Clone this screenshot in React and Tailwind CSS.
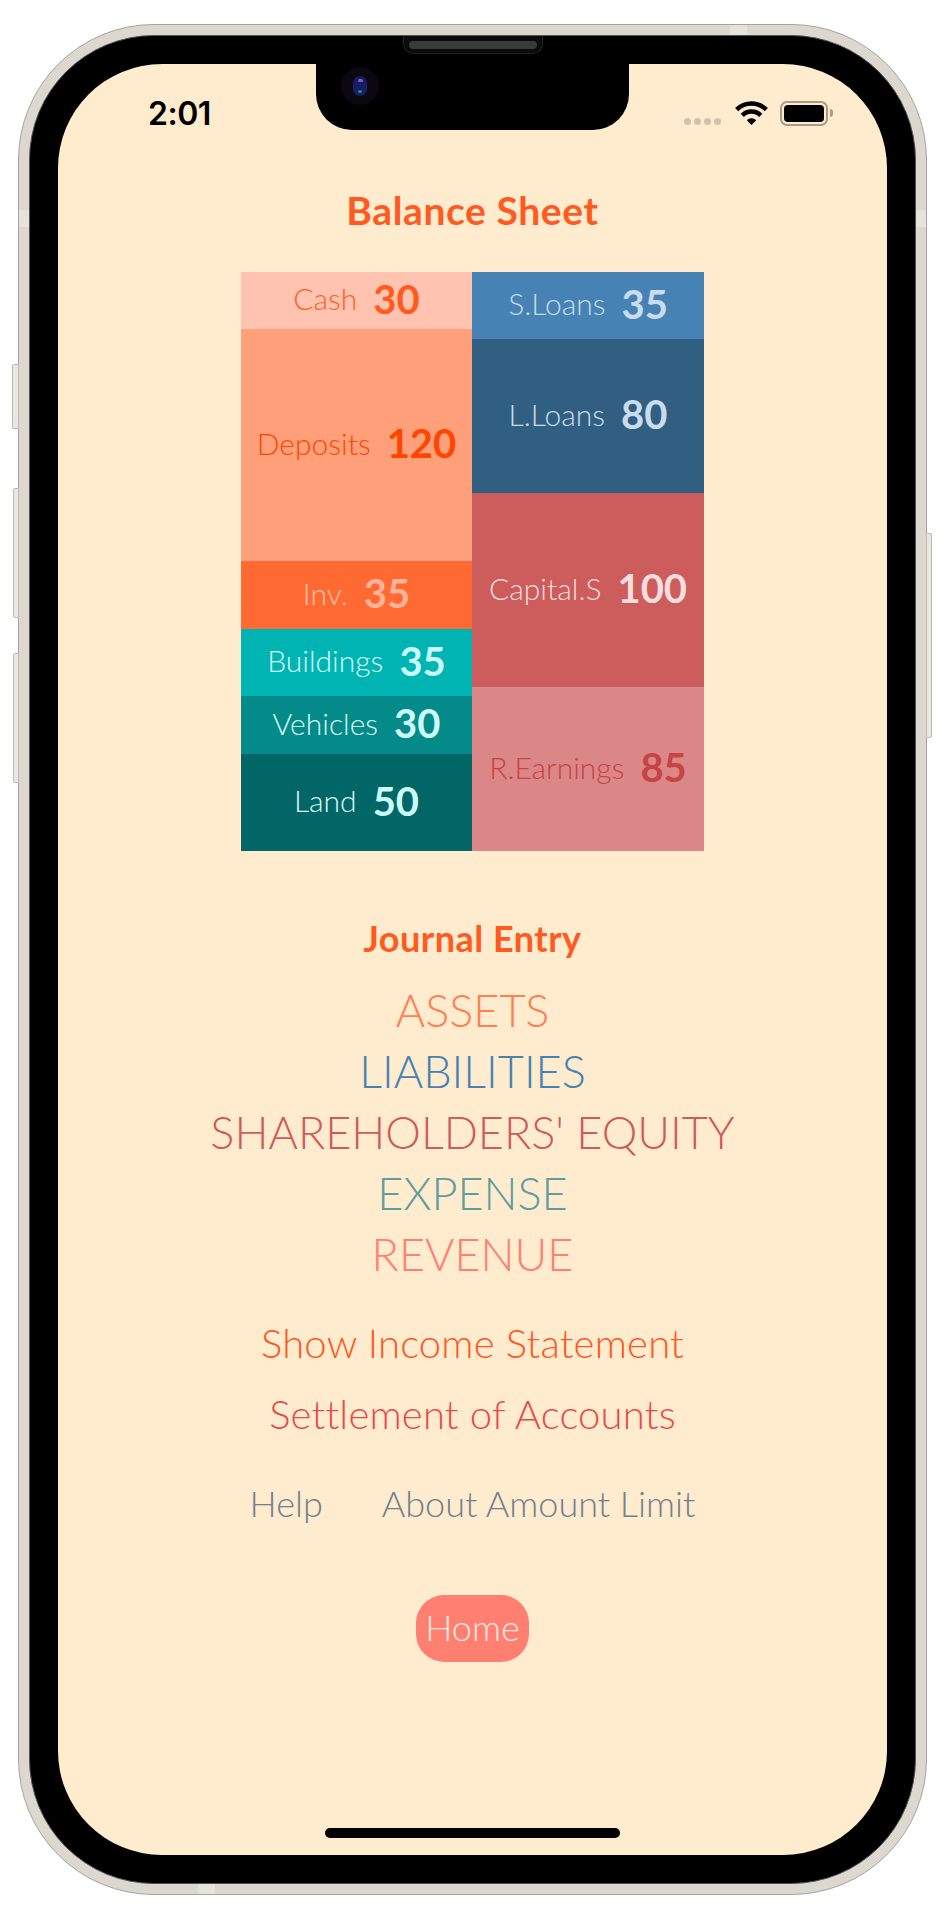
const assets = [
  { name: 'Cash', value: 30, box: 'h-[57px] bg-[#ffc3af]', label: 'text-[#ff5f27]', num: 'text-[#ff5a1f]' },
  { name: 'Deposits', value: 120, box: 'h-[232px] bg-[#ffa07a]', label: 'text-[#ff4500]', num: 'text-[#ff4500]' },
  { name: 'Inv.', value: 35, box: 'h-[68px] bg-[#ff6a33]', label: 'text-[#ffc0a8]', num: 'text-[#ffb398]' },
  { name: 'Buildings', value: 35, box: 'h-[67px] bg-[#00b4b4]', label: 'text-[#d8fbfb]', num: 'text-[#ccfafa]' },
  { name: 'Vehicles', value: 30, box: 'h-[58px] bg-[#058a8a]', label: 'text-[#d8fbfb]', num: 'text-[#ccfafa]' },
  { name: 'Land', value: 50, box: 'h-[97px] bg-[#036666]', label: 'text-[#d8fbfb]', num: 'text-[#ccfafa]' },
];

const claims = [
  { name: 'S.Loans', value: 35, box: 'h-[67px] bg-[#4682b4]', label: 'text-[#c9dcee]', num: 'text-[#c9dcee]' },
  { name: 'L.Loans', value: 80, box: 'h-[154px] bg-[#315f82]', label: 'text-[#c9dcee]', num: 'text-[#c9dcee]' },
  { name: 'Capital.S', value: 100, box: 'h-[194px] bg-[#cd5c5c]', label: 'text-[#f6dede]', num: 'text-[#f6dede]' },
  { name: 'R.Earnings', value: 85, box: 'h-[164px] bg-[#db8787]', label: 'text-[#c64444]', num: 'text-[#c64444]' },
];

const accounts = [
  { name: 'ASSETS', color: 'text-[#ff7f50]' },
  { name: 'LIABILITIES', color: 'text-[#4682b4]' },
  { name: "SHAREHOLDERS' EQUITY", color: 'text-[#cd5c5c]' },
  { name: 'EXPENSE', color: 'text-[#5f9ea0]' },
  { name: 'REVENUE', color: 'text-[#ff8070]' },
];

function Cell({ item }) {
  return (
    <div className={`flex items-center justify-center gap-[16px] pb-[4px] ${item.box}`}>
      <span className={`text-[30px] font-light ${item.label}`}>{item.name}</span>
      <span className={`text-[40px] font-bold ${item.num}`}>{item.value}</span>
    </div>
  );
}

function StatusBar() {
  return (
    <div className="w-full h-[38px] flex items-center justify-between pl-[90px] pr-[54px]">
      <span className="mt-[2px] text-[32px] font-semibold text-black font-['Inter',sans-serif] tracking-[-0.5px]">2:01</span>
      <div className="flex items-center">
        <div className="flex gap-[3px] mt-[16px] mr-[14px]">
          <i className="w-[7px] h-[7px] rounded-full bg-[#cfc3ae]" />
          <i className="w-[7px] h-[7px] rounded-full bg-[#cfc3ae]" />
          <i className="w-[7px] h-[7px] rounded-full bg-[#cfc3ae]" />
          <i className="w-[7px] h-[7px] rounded-full bg-[#cfc3ae]" />
        </div>
        <svg width="33" height="25" viewBox="0 0 33 25" className="mr-[12px]">
          <path d="M1.65 8.65 A21 21 0 0 1 31.35 8.65" fill="none" stroke="#000" strokeWidth="4.5" />
          <path d="M7.3 14.3 A13 13 0 0 1 25.7 14.3" fill="none" stroke="#000" strokeWidth="4.5" />
          <path d="M16.5 24 L11.8 19.3 A6.6 6.6 0 0 1 21.2 19.3 Z" fill="#000" />
        </svg>
        <div className="w-[48px] h-[25px] rounded-[7px] border-2 border-[#a89c88] p-[2px]">
          <div className="w-full h-full rounded-[4px] bg-black" />
        </div>
        <div className="w-[3px] h-[8px] rounded-r-full bg-[#a89c88] ml-[2px]" />
      </div>
    </div>
  );
}

export default function App() {
  return (
    <div className="w-[944px] h-[1920px] bg-white pt-[24px] pl-[18px] font-['Lato',sans-serif]">
      <div className="relative w-[909px] h-[1871px] rounded-[136px] bg-[#dcd8d0] border border-[#a8a49a] p-[10px]">
        {/* side buttons */}
        <div className="absolute left-[-7px] top-[339px] w-[7px] h-[65px] rounded-l-[2px] bg-[#eae7e1] border border-[#c0bcb2]" />
        <div className="absolute left-[-6px] top-[463px] w-[6px] h-[130px] rounded-l-[2px] bg-[#eae7e1] border border-[#c0bcb2]" />
        <div className="absolute left-[-6px] top-[628px] w-[6px] h-[130px] rounded-l-[2px] bg-[#eae7e1] border border-[#c0bcb2]" />
        <div className="absolute right-[-6px] top-[508px] w-[6px] h-[205px] rounded-r-[2px] bg-[#eae7e1] border border-[#c0bcb2]" />

        {/* antenna bands */}
        <div className="absolute left-0 top-[185px] w-[10px] h-[17px] bg-[#e6e3dc]" />
        <div className="absolute right-0 top-[185px] w-[10px] h-[17px] bg-[#e6e3dc]" />
        <div className="absolute left-[711px] top-0 w-[17px] h-[10px] bg-[#e6e3dc]" />
        <div className="absolute left-[179px] bottom-0 w-[17px] h-[10px] bg-[#e6e3dc]" />

        <div className="relative w-full h-full rounded-[125px] bg-black p-[28px] border border-[#55534e]">
          <div className="relative w-full h-full rounded-[104px] bg-[#ffebcd] overflow-hidden flex flex-col items-center pt-[30px]">
            <StatusBar />

            <h1 className="mt-[53px] h-[50px] leading-[50px] text-[39px] font-bold tracking-[0.6px] text-[#ff5a1f]">Balance Sheet</h1>

            <div className="mt-[37px] flex w-[463px]">
              <div className="w-[231px]">
                {assets.map((a) => (
                  <Cell key={a.name} item={a} />
                ))}
              </div>
              <div className="w-[232px]">
                {claims.map((c) => (
                  <Cell key={c.name} item={c} />
                ))}
              </div>
            </div>

            <h2 className="mt-[67px] h-[40px] leading-[40px] text-[36px] font-bold tracking-[0.5px] text-[#ff5a1f]">Journal Entry</h2>

            <div className="mt-[22px] flex flex-col items-center">
              {accounts.map((a) => (
                <div key={a.name} className={`h-[61px] leading-[61px] text-[45px] font-light ${a.color}`}>
                  {a.name}
                </div>
              ))}
            </div>

            <div className="mt-[33px] h-[50px] leading-[50px] text-[40px] font-light tracking-[0.2px] text-[#ff5722]">Show Income Statement</div>
            <div className="mt-[21px] h-[50px] leading-[50px] text-[40px] font-light tracking-[0.2px] text-[#e84a4a]">Settlement of Accounts</div>

            <div className="mt-[39px] h-[50px] flex gap-[59px] leading-[50px] text-[36px] font-light text-[#708090]">
              <span>Help</span>
              <span>About Amount Limit</span>
            </div>

            <div className="mt-[67px] w-[113px] h-[67px] pb-[4px] rounded-[28px] bg-[#ff8070] flex items-center justify-center text-[36px] font-light text-[#ffe8e2]">
              Home
            </div>

            <div className="mt-auto mb-[17px] w-[295px] h-[10px] rounded-full bg-black" />
          </div>
        </div>

        {/* notch */}
        <div className="absolute left-[297px] top-[39px] w-[313px] h-[66px] rounded-b-[36px] bg-black" />
        <div className="absolute left-[384px] top-[11px] w-[140px] h-[18px] rounded-b-[10px] bg-[#0b0b0b] border border-[#222] border-t-0 flex items-center justify-center">
          <div className="w-[128px] h-[8px] rounded-full bg-[#3a3a3a]" />
        </div>
        <div className="absolute left-[322px] top-[42px] w-[38px] h-[38px] rounded-full bg-[#0b0810] flex items-center justify-center">
          <div className="w-[14px] h-[20px] rounded-full bg-[#181c66] flex flex-col items-center justify-between py-[3px]">
            <i className="w-[5px] h-[3px] rounded-full bg-[#6a63c8]" />
            <i className="w-[4px] h-[3px] rounded-full bg-[#1f8a6a]" />
          </div>
        </div>
      </div>
    </div>
  );
}
